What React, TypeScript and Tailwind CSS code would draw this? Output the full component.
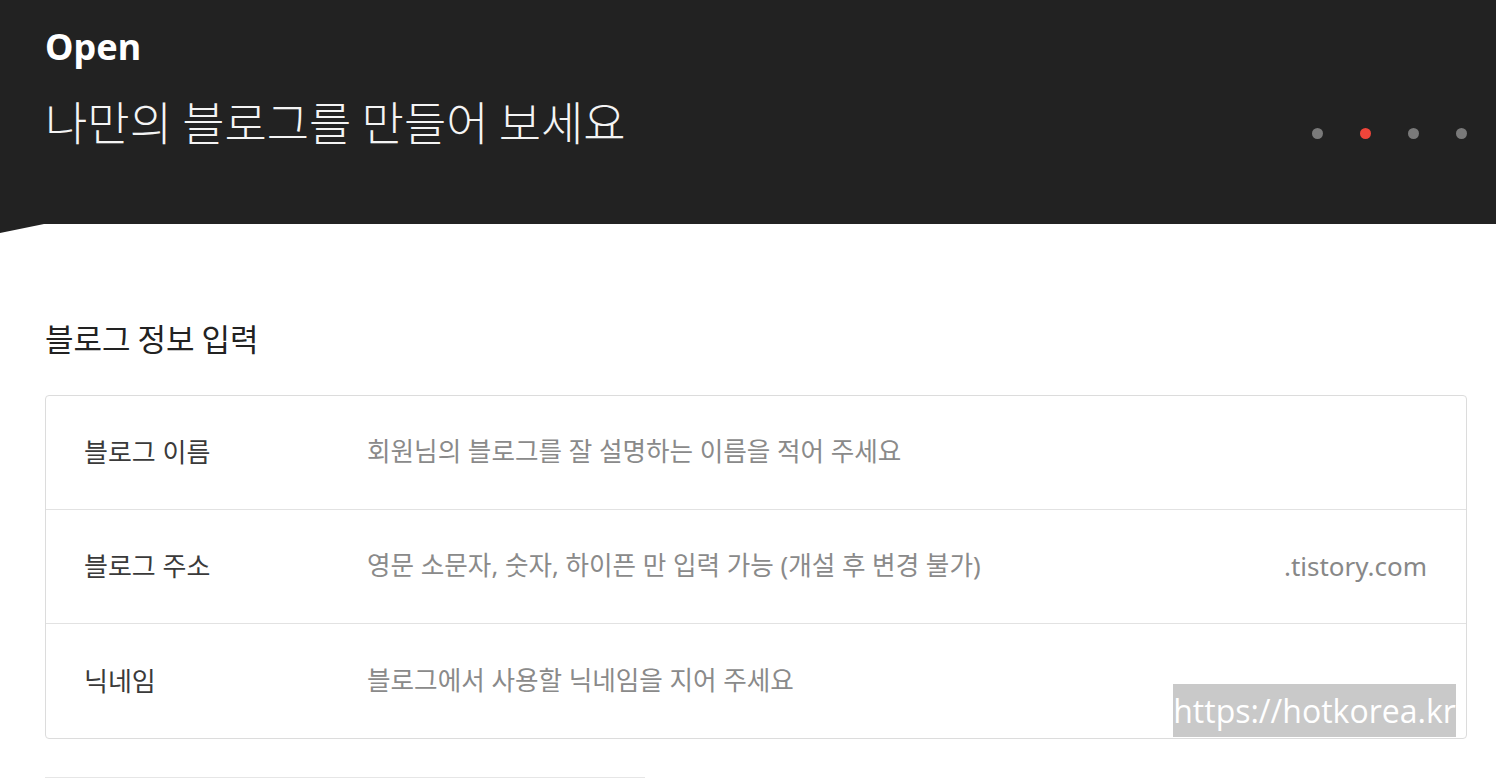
import React from "react";

const KR = { fontFamily: '"Noto Sans", "Noto Sans CJK KR", sans-serif' };

function Row({ label, placeholder, suffix, last }: { label: string; placeholder: string; suffix?: string; last?: boolean }) {
  return (
    <div className={`flex h-[114px] items-center pl-[38px] pr-[39px] ${last ? "" : "border-b border-[#e2e2e2]"}`}>
      <div className="w-[283px] shrink-0 text-[26px] text-[#3a3a3a]">{label}</div>
      <div className="flex-1 text-[25.6px] text-[#8a8a8a]">{placeholder}</div>
      {suffix && <div className="text-[26px] text-[#888]">{suffix}</div>}
    </div>
  );
}

export default function App() {
  return (
    <div className="relative h-[778px] w-[1496px] overflow-hidden bg-white" style={KR}>
      <div className="relative h-[224px] bg-[#222222] px-[45px] pt-[22px]">
        <div className="text-[36px] font-bold leading-[50px] text-white" style={{ fontFamily: '"Noto Sans", sans-serif' }}>
          Open
        </div>
        <div className="mt-[18px] flex items-center justify-between pr-[29px] -mr-[45px]">
          <div className="text-[46px] font-light leading-[60px] text-[#f4f4f4]" style={{ fontFamily: '"Noto Sans CJK KR", sans-serif' }}>
            나만의 블로그를 만들어 보세요
          </div>
          <div className="mt-[26px] flex items-center gap-[37px]">
            <span className="h-[11px] w-[11px] rounded-full bg-[#7a7a7a]" />
            <span className="h-[11px] w-[11px] rounded-full bg-[#f0453a]" />
            <span className="h-[11px] w-[11px] rounded-full bg-[#7a7a7a]" />
            <span className="h-[11px] w-[11px] rounded-full bg-[#7a7a7a]" />
          </div>
        </div>
        <svg className="absolute left-0 top-[224px]" width="44" height="10" viewBox="0 0 44 10">
          <polygon points="0,0 44,0 0,9" fill="#222222" />
        </svg>
      </div>

      <div className="pl-[45px] pr-[29px]">
        <h2 className="mt-[94px] text-[31px] font-normal leading-[40px] text-[#222]" style={{ fontFamily: '"Noto Sans CJK KR", sans-serif' }}>
          블로그 정보 입력
        </h2>
        <div className="mt-[37px] rounded-[4px] border border-[#dcdcdc]">
          <Row label="블로그 이름" placeholder="회원님의 블로그를 잘 설명하는 이름을 적어 주세요" />
          <Row label="블로그 주소" placeholder="영문 소문자, 숫자, 하이픈 만 입력 가능 (개설 후 변경 불가)" suffix=".tistory.com" />
          <Row label="닉네임" placeholder="블로그에서 사용할 닉네임을 지어 주세요" last />
        </div>
        <div className="mt-[38px] h-[4px] w-[600px] border-t border-[#e6e6e6]" />
      </div>

      <div
        className="absolute left-[1173px] top-[684px] flex h-[53px] w-[283px] items-center justify-center overflow-hidden whitespace-nowrap bg-[#c9c9c9] text-[32px] leading-none text-white"
        style={{ fontFamily: '"Open Sans", sans-serif' }}
      >
        https://hotkorea.kr
      </div>
    </div>
  );
}
